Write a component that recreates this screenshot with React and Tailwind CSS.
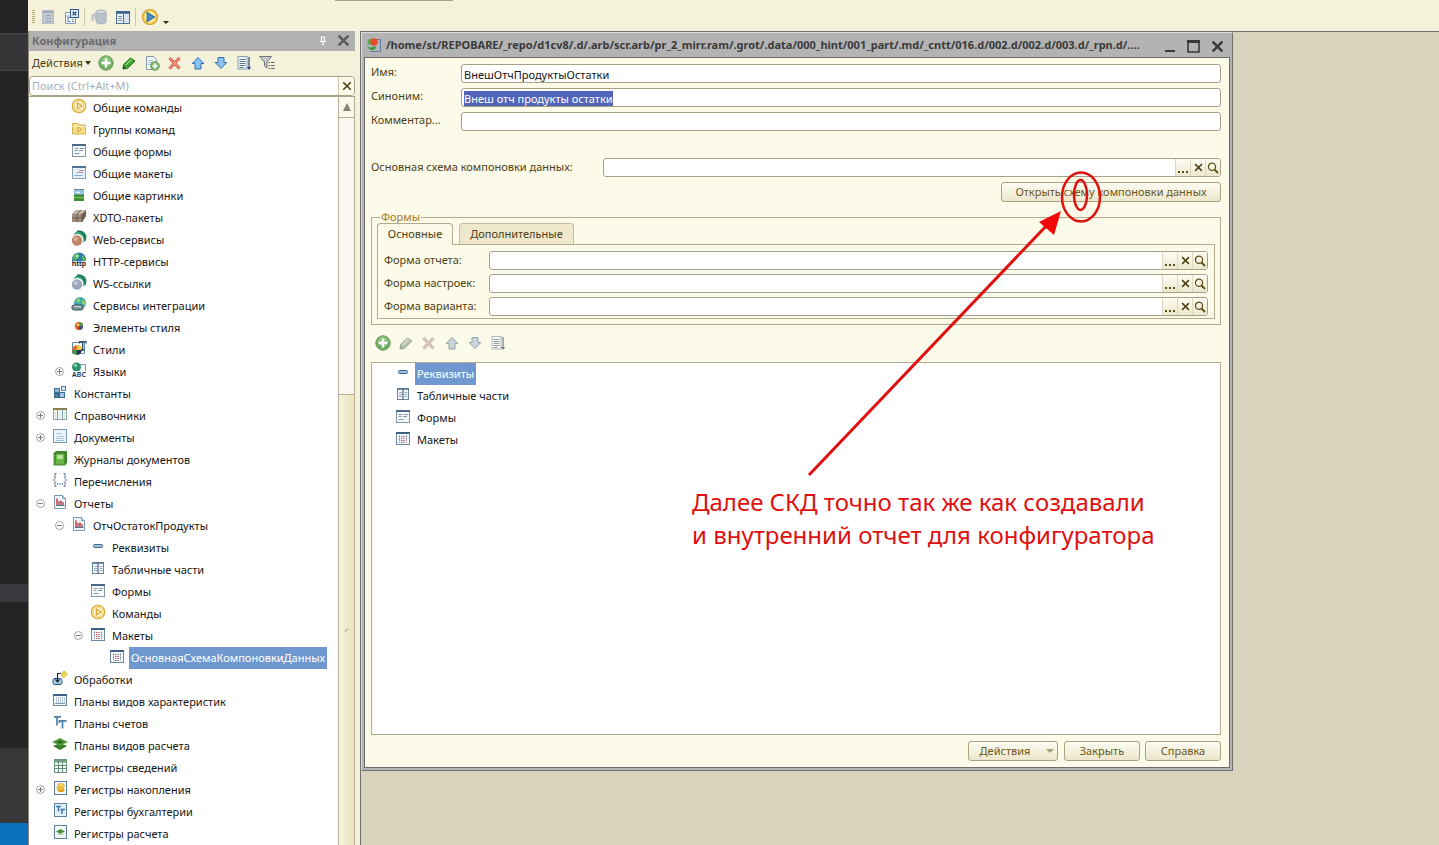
import React, { useEffect, useRef } from "react";

const icons = {
  command: (
    <>
      <circle cx="8" cy="8" r="6.700" fill="#fbe9a8" stroke="#dcae38" strokeWidth="1.300" />
      <circle cx="8" cy="8" r="4.600" fill="#fff7dc" stroke="#f0d68a" />
      <path d="M6.3 4.8v6.4L11.3 8z" fill="#fbe9b0" stroke="#cf9a1c" />
    </>
  ),
  commandGroup: (
    <>
      <path d="M1.500 3.500h5l1 1.500h7v9h-13z" fill="#f8dd87" stroke="#d3b057" />
      <path d="M1.500 6.500h13" stroke="#fff3c4" />
      <path d="M7 7v5l3.500-2.500z" fill="#fff0b8" stroke="#c29a3a" />
    </>
  ),
  form: (
    <>
      <rect x="1.500" y="2.500" width="13" height="12" fill="#f7fafc" stroke="#8296a8" />
      <path d="M1 3h14" stroke="#4a6a88" strokeWidth="2" />
      <path d="M3.500 6.500h4M3.500 8.500h3M3.500 11.500h5M9 6.500h4M8 8.500h4" stroke="#8297ab" />
    </>
  ),
  template: (
    <>
      <rect x="1.500" y="2.500" width="13" height="12" fill="#e4f0fa" stroke="#87a0b5" />
      <path d="M1 3h14" stroke="#4d7396" strokeWidth="2" />
      <path d="M8 6.500h5M6 8.500h6" stroke="#b88a9c" />
      <path d="M3.500 11.500h8" stroke="#7fa8cf" />
    </>
  ),
  picture: (
    <>
      <rect x="3" y="3" width="10" height="12" fill="#8fc3e6" />
      <path d="M3 3.500h10" stroke="#6d8090" />
      <path d="M5 6.500h4" stroke="#e2f1fb" strokeWidth="1.500" />
      <path d="M3 9c3-2 6 1 10-1v7H3z" fill="#3f8a35" />
      <path d="M3 11.500c3-1 6 1 10 0" stroke="#9acb6b" fill="none" />
    </>
  ),
  xdto: (
    <>
      <path d="M1 6l4-4h10v6l-4 6H1z" fill="#a08e7e" />
      <path d="M1 6h10l4-4H5z" fill="#c4b5a4" />
      <path d="M11 6v8l4-6V2z" fill="#75665a" />
      <path d="M6 6v8M1 10h10l4-5M11 6v8M6 6l4-4" stroke="#5b4f45" strokeWidth=".8" fill="none" />
    </>
  ),
  web: (
    <>
      <circle cx="9" cy="7" r="6.500" fill="#38a37c" />
      <path d="M6 1.500c5-1 9 4 8 9" stroke="#1c6e50" strokeWidth="1.500" fill="none" />
      <circle cx="6.500" cy="10" r="6" fill="#fff" />
      <circle cx="6" cy="10.500" r="5.200" fill="#c08667" />
      <circle cx="4.800" cy="9" r="2" fill="#dcae94" />
    </>
  ),
  http: (
    <>
      <circle cx="8" cy="7.500" r="7" fill="#2f79b8" />
      <path d="M3 3c3-3 6-1 5 2s-4 2-6 4c-1-2 0-4 1-6zM11 3c3 1 4 4 3 6-3 0-4-3-3-6z" fill="#53b45a" />
      <circle cx="6" cy="4" r="1.500" fill="#b9e3c0" />
      <rect x="0" y="9" width="16" height="7" fill="#fff" opacity=".85" />
      <text x="8" y="14" fontSize="7" fontWeight="600" textAnchor="middle" fontFamily="Noto Sans, sans-serif" fill="#111">http</text>
    </>
  ),
  ws: (
    <>
      <circle cx="9" cy="7" r="6.500" fill="#38a37c" />
      <path d="M6 1.500c5-1 9 4 8 9" stroke="#1c6e50" strokeWidth="1.500" fill="none" />
      <circle cx="6.500" cy="10" r="6" fill="#fff" />
      <circle cx="6" cy="10.500" r="5.200" fill="#98a5bb" />
      <circle cx="4.800" cy="9" r="2" fill="#c2cbd9" />
    </>
  ),
  integration: (
    <>
      <circle cx="9" cy="7" r="6" fill="#44a7b3" />
      <path d="M5 4c2-3 5-2 4 1s-3 2-4-1zM11 4c3 0 4 3 3 5-2 0-4-3-3-5z" fill="#8bd06a" />
      <rect x="1" y="9" width="11" height="5" rx="2" fill="#7d949b" stroke="#3c5359" />
      <path d="M3 10.500h7" stroke="#d7e3e6" />
    </>
  ),
  styleItem: (
    <>
      <circle cx="8" cy="8" r="4" fill="#d9542c" />
      <path d="M8 8V4a4 4 0 0 1 4 4z" fill="#4b9a3c" />
      <path d="M8 8h4a4 4 0 0 1-4 4z" fill="#3f4d9e" />
      <circle cx="7" cy="6.700" r="1.500" fill="#ffd23e" />
    </>
  ),
  style: (
    <>
      <path d="M1.500 2.500h12v11h-12z" fill="#fff" stroke="#5f8db0" />
      <circle cx="6" cy="10" r="4.800" fill="#e0702a" />
      <path d="M6 10V5.200A4.800 4.800 0 0 1 10.800 10z" fill="#ffcf33" />
      <path d="M6 10h4.800A4.800 4.800 0 0 1 6 14.800z" fill="#22305c" />
      <path d="M1.200 10H6v4.800A4.800 4.800 0 0 1 1.200 10z" fill="#3f8f4c" />
      <path d="M8.500 3.500V1.700h6.500v1.800M11.700 2v8M10 10h3.500" stroke="#2b4a66" strokeWidth="1.300" fill="none" />
    </>
  ),
  language: (
    <>
      <path d="M7 2.500h7.500v9H7z" fill="#fff" stroke="#6aa0b8" />
      <circle cx="5.500" cy="5" r="4.500" fill="#27926b" />
      <circle cx="4.500" cy="3.500" r="1.800" fill="#7fd0ad" />
      <rect x="0" y="9" width="16" height="7" fill="#fff" opacity=".9" />
      <text x="8" y="15" fontSize="7" fontWeight="600" textAnchor="middle" fontFamily="Noto Sans, sans-serif" fill="#16324a">ABC</text>
    </>
  ),
  constants: (
    <>
      <rect x="2.500" y="4.500" width="5" height="4" fill="#8fb8d6" stroke="#3e6f94" />
      <rect x="9.500" y="2.500" width="4" height="4" fill="#d6e8f5" stroke="#4c82a8" />
      <rect x="2.500" y="9.500" width="4" height="4" fill="#5587ab" stroke="#33627f" />
      <rect x="7.500" y="8.500" width="5" height="5" fill="#a4c6de" stroke="#3e6f94" />
    </>
  ),
  catalog: (
    <>
      <rect x="1.500" y="2.500" width="13" height="11" fill="#f3f8f5" stroke="#8aa3a0" />
      <path d="M1 3h14" stroke="#8c7d4a" strokeWidth="2" />
      <path d="M5.500 3v10.500M10.500 3v10.500" stroke="#7a9aa8" />
      <path d="M3.500 5v7M8 5v7M12.500 5v7" stroke="#d8e4d4" />
    </>
  ),
  document: (
    <>
      <rect x="1.500" y="1.500" width="13" height="13" fill="#edf5fc" stroke="#7798b3" />
      <path d="M4 5.500h6M4 8.500h8M4 10.500h8M4 12.500h8" stroke="#a9c5dd" />
    </>
  ),
  journal: (
    <>
      <path d="M2 3l2-2h11v12l-2 2H2z" fill="#3f8d2e" />
      <rect x="2" y="3" width="11" height="12" fill="#6bb548" stroke="#2f6f24" strokeWidth=".8" />
      <rect x="5" y="5" width="6" height="4" fill="#b8e29a" />
      <path d="M3.500 4v10" stroke="#2a5e20" strokeDasharray="1 1" />
    </>
  ),
  enumeration: (
    <>
      <path d="M4.500 1.500H3v5L1.500 8 3 9.500v5h1.500M11.500 1.500H13v5L14.500 8 13 9.500v5h-1.500" fill="none" stroke="#59728a" />
      <path d="M5 12h1.200M7.400 12h1.200M9.800 12H11" stroke="#59728a" strokeWidth="1.500" />
    </>
  ),
  report: (
    <>
      <path d="M2.500 1.500h8l3 3v10h-11z" fill="#f3f8fc" stroke="#7c97ad" />
      <path d="M10.500 1.500v3h3" fill="#d4e2ee" stroke="#7c97ad" />
      <path d="M5 4.500V11M9 6.500V11" stroke="#c23b3b" strokeWidth="1.500" />
      <path d="M7 7v4M11 8v3" stroke="#8a3350" strokeWidth="1.200" />
      <path d="M4 11.500h8.500" stroke="#59728a" />
    </>
  ),
  attribute: <rect x="3.500" y="6.500" width="9" height="3" rx="1" fill="#9bc0de" stroke="#3f6789" />,
  tabular: (
    <>
      <rect x="2.500" y="2.500" width="11" height="11" fill="#f4f8fc" stroke="#6a85a0" />
      <path d="M2 3h12" stroke="#58748f" strokeWidth="1.500" />
      <path d="M8 2v12" stroke="#4b6985" strokeWidth="1.200" />
      <path d="M4 6.500h3M4 8.500h3M4 10.500h3M9.500 6.500h3M9.500 8.500h3M9.500 10.500h3" stroke="#96adc4" />
    </>
  ),
  layout: (
    <>
      <rect x="1.500" y="2.500" width="13" height="12" fill="#f7fafc" stroke="#6c86a0" />
      <path d="M1 3h14" stroke="#3f6187" strokeWidth="2" />
      <path d="M4.500 5.500v7M11.500 5.500v7" stroke="#6d8299" strokeDasharray="2 1" />
      <path d="M6 6.500h4M6 8.500h4M6 10.500h4M6 12.500h4" stroke="#b0566a" strokeDasharray="1.500 .800" />
    </>
  ),
  processing: (
    <>
      <path d="M9 5l3-4 3.500 3-4 4z" fill="#f5d54c" stroke="#d9b93a" />
      <rect x="1" y="8.500" width="9" height="6" rx="2" fill="#a8cbe6" stroke="#24507a" />
      <path d="M9 3.500H5.500V11.500M3.500 9.500l2 2.500 2-2.500" fill="none" stroke="#16283a" strokeWidth="1.200" />
    </>
  ),
  charPlan: (
    <>
      <rect x="1.500" y="2.500" width="13" height="11" fill="#f5f9fc" stroke="#6c86a0" />
      <path d="M1 3h14" stroke="#3f6187" strokeWidth="2" />
      <path d="M4.500 5.500v5M6.500 5.500v5M8.500 5.500v5M10.500 5.500v5M12.500 5.500v5" stroke="#7e9ab5" strokeDasharray="1 1" />
      <path d="M3 11.500h10" stroke="#7e9ab5" />
    </>
  ),
  accountPlan: (
    <path d="M2 2.800h7M5 2.500v9M7.800 6.800h6.700M10.500 6.500v8M7.500 6v3" fill="none" stroke="#4c7ea6" strokeWidth="1.700" />
  ),
  calcPlan: (
    <>
      <path d="M1 10l7-3 7 3-7 4z" fill="#3c7c28" />
      <path d="M0 6l8-4 8 4-8 4z" fill="#56a13a" />
      <path d="M4 6l4-2 4 2-4 2z" fill="#2f6b22" />
    </>
  ),
  infoReg: (
    <>
      <rect x="2.500" y="1.500" width="12" height="13" fill="#f2f8f3" stroke="#6b8d80" />
      <path d="M2 3h13" stroke="#6fa07a" strokeWidth="3" />
      <path d="M2.500 7.500h12M2.500 10.500h12M6.500 2v12M10.500 2v12" stroke="#6b8d80" />
    </>
  ),
  accumReg: (
    <>
      <rect x="2.500" y="1.500" width="12" height="13" fill="#f3f8fc" stroke="#5e7f9b" />
      <ellipse cx="9" cy="10" rx="3.500" ry="2" fill="#e09b1e" />
      <ellipse cx="8" cy="8" rx="3.500" ry="2" fill="#f0bc3a" />
      <ellipse cx="9" cy="5.500" rx="3.500" ry="2" fill="#f7d469" stroke="#d18e18" strokeWidth=".6" />
    </>
  ),
  bookReg: (
    <>
      <rect x="2.500" y="1.500" width="12" height="13" fill="#e3f0fa" stroke="#5e7f9b" />
      <path d="M4 4.500h5M6.500 4v5.500M8.500 7.500h4.500M10 7v5" fill="none" stroke="#3f77a3" strokeWidth="1.500" />
    </>
  ),
  calcReg: (
    <>
      <rect x="2.500" y="1.500" width="12" height="13" fill="#f3f8fc" stroke="#5e7f9b" />
      <path d="M4 7.500L8.500 5 13 7.500 8.500 10z" fill="#479434" />
      <path d="M5 10.500h7" stroke="#b9d3b0" />
    </>
  ),
  add: (
    <>
      <circle cx="8" cy="8" r="7.200" fill="#6fae5c" stroke="#6d9a62" />
      <circle cx="8" cy="6.500" r="5" fill="#8cc67a" />
      <path d="M8 3.500v9M3.500 8h9" stroke="#fff" strokeWidth="2.400" />
    </>
  ),
  edit: (
    <>
      <path d="M2.500 9.500L9.500 3l4.500 3-7.500 7.500L2 14z" fill="#3fa535" stroke="#257a1f" />
      <path d="M4.500 10l6-5.500" stroke="#8ad872" strokeWidth="1.300" />
      <path d="M2 14l.7-3 2.300 2.300z" fill="#20401c" />
    </>
  ),
  copy: (
    <>
      <path d="M2.500 1.500h7l3 3v10h-10z" fill="#f1f6fb" stroke="#8298ad" />
      <path d="M4.500 5.500h5M4.500 7.500h4M4.500 9.500h3" stroke="#a5b9cb" />
      <circle cx="11" cy="11" r="4.300" fill="#8fbf7e" stroke="#5f9152" />
      <path d="M11 8.500v5M8.500 11h5" stroke="#fff" strokeWidth="1.500" />
    </>
  ),
  remove: (
    <>
      <path d="M2.500 3l10 10.500M12.500 3l-10 10.500" stroke="#c4402c" strokeWidth="2.800" />
      <path d="M2.700 3.200l9.600 10.100M12.300 3.200L2.700 13.300" stroke="#f79a88" strokeWidth="1.400" />
    </>
  ),
  up: <path d="M8 2.500l5.800 6H11v5.500H5V8.500H2.200z" fill="#8cc2f0" stroke="#2f6fae" />,
  down: <path d="M8 13.500l5.800-6H11V2.500H5v5H2.200z" fill="#8cc2f0" stroke="#2f6fae" />,
  sort: (
    <>
      <rect x="2" y="1.500" width="9" height="12.500" fill="#f2f6fa" stroke="#8ba0b4" />
      <path d="M3.500 4.500h6M3.500 6.500h6M3.500 8.500h6M3.500 10.500h6M3.500 12.500h4" stroke="#5f7992" />
      <path d="M13 2v12M11.500 12l1.500 2 1.500-2" fill="none" stroke="#2c4a78" strokeWidth="1.200" />
    </>
  ),
  filter: (
    <>
      <path d="M.5 1.500h12L8 7v6L5.500 11V7z" fill="#c5c9cc" stroke="#6e767c" />
      <path d="M9.500 7.500h1.500M12 7.500h3.500M9.500 10.500h1.500M12 10.500h3.500M9.500 13.500h1.500M12 13.500h3.500" stroke="#5c6268" />
    </>
  ),
  docGray: (
    <>
      <rect x="2.500" y="1.500" width="11" height="13" fill="#c3c8d0" stroke="#b6bcc5" />
      <path d="M3 3h10" stroke="#a4abb8" strokeWidth="2" />
      <path d="M6 6.500h5M6 9.500h5M6 12.500h5" stroke="#9ca4b0" />
    </>
  ),
  docTree: (
    <>
      <path d="M1.500 3.500h10v11h-10z" fill="#eef3f8" stroke="#8298ad" />
      <path d="M4 6v6.500h2.500M4 8.500h2.500M8 10.500h1.500M8 12.500h2" fill="none" stroke="#6d86a0" />
      <rect x="6.500" y=".5" width="8" height="8" fill="#e4eef7" stroke="#335d86" />
      <path d="M8.700 2.700l3.600 3.600M12.300 2.700L8.700 6.300" stroke="#2c5a88" strokeWidth="1.400" />
    </>
  ),
  database: (
    <>
      <path d="M5 3v10c0 2.500 10 2.500 10 0V3z" fill="#b9c0ca" stroke="#a7afba" />
      <ellipse cx="10" cy="3" rx="5" ry="2" fill="#d6dae0" stroke="#a7afba" />
      <path d="M1.500 12V8C1.500 5 4 5 6 7M3.500 4.500l3 3-3.500 1" fill="none" stroke="#b9bec4" strokeWidth="2" />
    </>
  ),
  windowIcon: (
    <>
      <rect x="1.500" y="2.500" width="13" height="12" fill="#eaf2fa" stroke="#54728f" />
      <path d="M1 3.500h14" stroke="#3b6288" strokeWidth="2.500" />
      <path d="M3 7.500h4M3 9.500h4M3 11.500h4" stroke="#7d97b0" />
      <rect x="9" y="5" width="5" height="9" fill="#d9e4f0" />
      <path d="M8.500 5v9" stroke="#54728f" />
    </>
  ),
  run: (
    <>
      <circle cx="8" cy="8" r="6.700" fill="#f9cf55" stroke="#cf9a2c" />
      <circle cx="8" cy="8" r="4.800" fill="#fdeaa6" />
      <path d="M5.500 4v8L12 8z" fill="#4a92cc" stroke="#2a6aa0" />
    </>
  ),
};

function Icon({ name, className = "size-4" }) {
  return (
    <svg viewBox="0 0 16 16" className={`${className} shrink-0`} aria-hidden="true">
      {icons[name]}
    </svg>
  );
}

const Cross = ({ className, width = 2 }) => (
  <svg viewBox="0 0 12 12" className={`${className} shrink-0`} aria-hidden="true">
    <path d="M1.500 1.500l9 9M10.500 1.500l-9 9" stroke="currentColor" strokeWidth={width} />
  </svg>
);

const indents = ["pl-1", "pl-[23px]", "pl-[42px]", "pl-[61px]"];

const tree = [
  [1, "command", "Общие команды"],
  [1, "commandGroup", "Группы команд"],
  [1, "form", "Общие формы"],
  [1, "template", "Общие макеты"],
  [1, "picture", "Общие картинки"],
  [1, "xdto", "XDTO-пакеты"],
  [1, "web", "Web-сервисы"],
  [1, "http", "HTTP-сервисы"],
  [1, "ws", "WS-ссылки"],
  [1, "integration", "Сервисы интеграции"],
  [1, "styleItem", "Элементы стиля"],
  [1, "style", "Стили"],
  [1, "language", "Языки", "+"],
  [0, "constants", "Константы"],
  [0, "catalog", "Справочники", "+"],
  [0, "document", "Документы", "+"],
  [0, "journal", "Журналы документов"],
  [0, "enumeration", "Перечисления"],
  [0, "report", "Отчеты", "-"],
  [1, "report", "ОтчОстатокПродукты", "-"],
  [2, "attribute", "Реквизиты"],
  [2, "tabular", "Табличные части"],
  [2, "form", "Формы"],
  [2, "command", "Команды"],
  [2, "layout", "Макеты", "-"],
  [3, "layout", "ОсновнаяСхемаКомпоновкиДанных", null, true],
  [0, "processing", "Обработки"],
  [0, "charPlan", "Планы видов характеристик"],
  [0, "accountPlan", "Планы счетов"],
  [0, "calcPlan", "Планы видов расчета"],
  [0, "infoReg", "Регистры сведений"],
  [0, "accumReg", "Регистры накопления", "+"],
  [0, "bookReg", "Регистры бухгалтерии"],
  [0, "calcReg", "Регистры расчета"],
];

function Label({ text, selected }) {
  return (
    <span
      className={`flex h-full items-center px-0.5 whitespace-nowrap ${selected ? "bg-[#6f98d0] text-white" : "text-[#161616]"}`}
    >
      {text}
    </span>
  );
}

function TreeRow({ level, icon, text, toggle, selected }) {
  return (
    <li className={`flex h-[22px] items-center ${indents[level]}`}>
      <span className="mr-1 flex w-[15px] shrink-0 justify-center">
        {toggle && (
          <button aria-label={toggle === "+" ? "Развернуть" : "Свернуть"} className="pb-px">
            <svg viewBox="0 0 9 9" className="size-[9px]">
              <circle cx="4.500" cy="4.500" r="4" fill="#fff" stroke="#a3a3a3" />
              <path d={toggle === "+" ? "M2 4.500h5M4.500 2v5" : "M2 4.500h5"} stroke="#7a7a7a" />
            </svg>
          </button>
        )}
      </span>
      <span className="mr-1 flex h-full pt-px">
        <Icon name={icon} />
      </span>
      <Label text={text} selected={selected} />
    </li>
  );
}

const actionIcons = [
  ["add", "Добавить"],
  ["edit", "Изменить"],
  ["copy", "Скопировать"],
  ["remove", "Удалить"],
  ["up", "Вверх"],
  ["down", "Вниз"],
  ["sort", "Сортировка"],
  ["filter", "Фильтр"],
];

function ConfigurationPanel() {
  return (
    <aside className="flex w-[327px] shrink-0 flex-col border-l border-[#8f8b7c]">
      <header className="flex h-5 items-center bg-[#b1b1b1] pr-[5px] pb-px pl-[3px]">
        <h2 className="flex-1 font-bold text-[#6b6b6b]">Конфигурация</h2>
        <button aria-label="Закрепить" className="mr-[10px] text-white">
          <svg viewBox="0 0 8 10" className="h-[10px] w-2">
            <path d="M2.500 1h3v4.500h-3zM1 5.500h6M4 6v3.500" fill="none" stroke="currentColor" strokeWidth="1.200" />
          </svg>
        </button>
        <button aria-label="Закрыть панель" className="text-[#5c5c5c]">
          <Cross className="size-[13px]" width={2.4} />
        </button>
      </header>
      <div className="flex h-[25px] items-center gap-[7px] bg-[#f5f2dc] pb-px pl-[3px]">
        <button className="flex items-center gap-0.5 text-[#4c3f14]">
          Действия
          <svg viewBox="0 0 6 4" className="h-1 w-[6px]">
            <path d="M0 0h6L3 4z" fill="#3d3416" />
          </svg>
        </button>
        {actionIcons.map(([name, title]) => (
          <button key={name} aria-label={title}>
            <Icon name={name} />
          </button>
        ))}
      </div>
      <div className="flex h-5 overflow-hidden rounded-sm border border-[#aaa388] bg-white">
        <input
          aria-label="Поиск"
          placeholder="Поиск (Ctrl+Alt+M)"
          className="min-w-0 flex-1 px-0.5 outline-none placeholder:text-[#a7afbb]"
        />
        <button
          aria-label="Очистить"
          className="flex w-4 items-center justify-center border-l border-[#cfc9ac] bg-[#fbf9e8] text-[#4c4010]"
        >
          <Cross className="size-[10px]" />
        </button>
      </div>
      <div className="flex min-h-0 flex-1 border-t border-[#aaa388] bg-white">
        <ul className="min-w-0 flex-1 overflow-hidden">
          {tree.map(([level, icon, text, toggle, selected]) => (
            <TreeRow key={`${level}${text}`} level={level} icon={icon} text={text} toggle={toggle} selected={selected} />
          ))}
        </ul>
        <div className="flex w-[17px] shrink-0 flex-col border-x border-[#b5ae94] bg-[#f9f7f1]">
          <button
            aria-label="Прокрутить вверх"
            className="flex h-[21px] shrink-0 items-center justify-center border-b border-[#b5ae94] bg-[#faf8ea]"
          >
            <svg viewBox="0 0 8 8" className="size-2">
              <path d="M4 0l4 8H0z" fill="#857f70" />
            </svg>
          </button>
          <div className="h-[276px] shrink-0" />
          <div className="flex flex-1 items-center justify-center border-t border-[#b5ae94] bg-linear-to-r from-[#f6f3da] to-[#e9e4bd]">
            <span className="mb-[-22px] size-1 rounded-full border-t border-l border-[#b0a982]" />
          </div>
        </div>
      </div>
    </aside>
  );
}

const fieldFrame = "h-[19px] min-w-0 flex-1 rounded-[3px] border border-[#a8a18a] bg-white";
const entry = "min-w-0 flex-1 px-0.5 pt-[3px] pb-px leading-[13px] text-[#161616] outline-none";

function TextField({ id, label, value = "", inputRef }) {
  return (
    <div className="flex">
      <label htmlFor={id} className="w-[90px] shrink-0 leading-4">
        {label}
      </label>
      <input
        id={id}
        ref={inputRef}
        defaultValue={value}
        className={`${fieldFrame} ${entry} selection:bg-[#5065b9] selection:text-white`}
      />
    </div>
  );
}

const chip = "flex w-[15px] items-center justify-center border-l border-[#ddd7bd] bg-linear-to-b from-[#fdfcf2] to-[#ece8cf]";

function PickerField({ id, label, labelWidth }) {
  return (
    <div className="flex">
      <label htmlFor={id} className={`${labelWidth} shrink-0 leading-[18px]`}>
        {label}
      </label>
      <div className={`${fieldFrame} flex overflow-hidden`}>
        <input id={id} className={entry} />
        <button type="button" aria-label="Выбрать" className={chip}>
          <svg viewBox="0 0 12 12" className="size-3">
            <path d="M1 9h2v2H1zM5 9h2v2H5zM9 9h2v2H9z" fill="#5b4e18" />
          </svg>
        </button>
        <button type="button" aria-label="Очистить" className={chip}>
          <Cross className="size-[9px]" />
        </button>
        <button type="button" aria-label="Открыть" className={chip}>
          <svg viewBox="0 0 12 12" className="size-3">
            <circle cx="5" cy="4.800" r="3.600" fill="none" stroke="#5b4e18" strokeWidth="1.200" />
            <path d="M7.500 7.500l3.500 3.500" stroke="#5b4e18" strokeWidth="1.800" />
          </svg>
        </button>
      </div>
    </div>
  );
}

function PushButton({ className, children }) {
  return (
    <button
      type="button"
      className={`flex h-5 items-center justify-center rounded-[3px] border border-[#aaa27c] bg-linear-to-b from-[#fdfcf3] to-[#ebe6cb] text-[#6a5818] ${className}`}
    >
      {children}
    </button>
  );
}

const objectParts = [
  ["attribute", "Реквизиты", true],
  ["tabular", "Табличные части"],
  ["form", "Формы"],
  ["layout", "Макеты"],
];

const objectActions = [
  ["add", "Добавить", ""],
  ["edit", "Изменить", "opacity-50 grayscale-70"],
  ["remove", "Удалить", "opacity-50 grayscale-70"],
  ["up", "Вверх", "opacity-60 grayscale-60"],
  ["down", "Вниз", "opacity-60 grayscale-60"],
  ["sort", "Сортировка", "opacity-70 grayscale-50"],
];

function Annotation() {
  return (
    <div className="pointer-events-none absolute inset-0 text-[#e01010]">
      <svg className="absolute top-0 left-0 h-full w-full" aria-hidden="true">
        <g fill="none" stroke="#e01010">
          <ellipse cx="719" cy="164" rx="19" ry="24.500" strokeWidth="2.500" />
          <ellipse cx="718.500" cy="162" rx="6.500" ry="15" strokeWidth="2.500" />
          <path d="M447 442L686 191" strokeWidth="3" />
        </g>
        <path d="M699 178l-7 24-15-13z" fill="#f00808" />
      </svg>
      <p className="absolute top-[452px] left-[330px] text-[24px] leading-[33px] whitespace-nowrap">
        Далее СКД точно так же как создавали
        <br />и внутренний отчет для конфигуратора
      </p>
    </div>
  );
}

function ReportDialog() {
  const synonym = useRef(null);
  useEffect(() => {
    synonym.current.focus();
    synonym.current.select();
  }, []);
  return (
    <section className="relative w-full max-w-[872px] border border-t-[#dcdada] border-r-[#707070] border-b-[#707070] border-l-[#dcdada] bg-[#b3b3b3] pr-[2px] pb-[2px] pl-[2px]">
      <header className="flex h-6 items-center pr-[6px] pl-0.5 text-[#3a3a3a]">
        <svg viewBox="0 0 16 16" className="mr-1 size-4 shrink-0" aria-hidden="true">
          <path d="M9 2.500h5.500v12H4" fill="none" stroke="#6178a0" />
          <circle cx="4.500" cy="5" r="3" fill="#4fae4c" />
          <circle cx="8" cy="5" r="3.700" fill="#ee4a2c" />
          <path d="M1 9.500c2 4 7 5 9 1l-2-1.500c-2 2-4 2-7 .5z" fill="#3d9648" />
        </svg>
        <h1 className="min-w-0 flex-1 truncate font-bold">
          /home/st/REPOBARE/_repo/d1cv8/.d/.arb/scr.arb/pr_2_mirr.ram/.grot/.data/000_hint/001_part/.md/_cntt/016.d/002.d/002.d/003.d/_rpn.d/....
        </h1>
        <div className="ml-2 flex items-center gap-[11px] pt-0.5">
          <button aria-label="Свернуть">
            <svg viewBox="0 0 12 12" className="size-3">
              <path d="M1 11h10" stroke="currentColor" strokeWidth="2" />
            </svg>
          </button>
          <button aria-label="Развернуть">
            <svg viewBox="0 0 13 13" className="size-[13px]">
              <path d="M1 1v11h11V1z" fill="none" stroke="currentColor" strokeWidth="1.600" />
              <path d="M0 1.500h13" stroke="currentColor" strokeWidth="3" />
            </svg>
          </button>
          <button aria-label="Закрыть окно">
            <Cross className="size-[13px]" width={2.4} />
          </button>
        </div>
      </header>
      <form
        className="flex flex-col border border-[#6c6c6c] bg-[#fcfae9] pt-[6px] pr-2 pb-[6px] pl-[6px] text-[#4c3f14]"
        onSubmit={(e) => e.preventDefault()}
      >
        <div className="flex flex-col gap-[5px]">
          <TextField id="name" label="Имя:" value="ВнешОтчПродуктыОстатки" />
          <TextField id="synonym" label="Синоним:" value="Внеш отч продукты остатки" inputRef={synonym} />
          <TextField id="comment" label="Комментар..." />
        </div>
        <div className="mt-[27px]">
          <PickerField id="schema" label="Основная схема компоновки данных:" labelWidth="w-[232px]" />
        </div>
        <PushButton className="mt-[5px] w-[220px] self-end">Открыть схему компоновки данных</PushButton>
        <fieldset className="mt-[9px] border border-[#b3ab8c] px-[5px] pb-[5px]">
          <legend className="ml-[3px] px-px leading-3 text-[#a47a25]">Формы</legend>
          <div role="tablist" className="relative flex gap-[6px]">
            <button
              type="button"
              role="tab"
              aria-selected="true"
              className="-mb-px h-[22px] w-[76px] rounded-t-[4px] border border-b-0 border-[#b3ab8c] bg-[#fcfae9] pb-0.5"
            >
              Основные
            </button>
            <button
              type="button"
              role="tab"
              aria-selected="false"
              className="h-[21px] w-[115px] rounded-t-[4px] border border-b-0 border-[#c5bd9e] bg-[#eee7cc] pb-px"
            >
              Дополнительные
            </button>
          </div>
          <div role="tabpanel" className="flex flex-col gap-1 border border-[#b3ab8c] pt-[6px] pr-[6px] pb-[2px] pl-[6px]">
            <PickerField id="reportForm" label="Форма отчета:" labelWidth="w-[105px]" />
            <PickerField id="settingsForm" label="Форма настроек:" labelWidth="w-[105px]" />
            <PickerField id="variantForm" label="Форма варианта:" labelWidth="w-[105px]" />
          </div>
        </fieldset>
        <div className="mt-[10px] flex gap-[7px] pl-1">
          {objectActions.map(([name, title, tone]) => (
            <button key={name} type="button" aria-label={title} className={tone}>
              <Icon name={name} />
            </button>
          ))}
        </div>
        <ul className="mt-[11px] min-h-[373px] border border-[#b3ab8c] bg-white">
          {objectParts.map(([icon, text, selected]) => (
            <li key={text} className="flex h-[22px] items-center pl-[23px]">
              <span className="mr-1 flex h-full pt-px">
                <Icon name={icon} />
              </span>
              <Label text={text} selected={selected} />
            </li>
          ))}
        </ul>
        <div className="mt-[6px] flex justify-end gap-[5px]">
          <PushButton className="mr-px w-[90px] gap-4 pl-2">
            Действия
            <svg viewBox="0 0 8 4" className="h-1 w-2">
              <path d="M0 0h8L4 4z" fill="#a89d75" />
            </svg>
          </PushButton>
          <PushButton className="w-[76px]">Закрыть</PushButton>
          <PushButton className="w-[76px]">Справка</PushButton>
        </div>
      </form>
      <Annotation />
    </section>
  );
}

function MainToolbar() {
  return (
    <header className="flex h-[31px] shrink-0 flex-col bg-[#f5f2dc]">
      <div className="ml-[307px] h-px w-[118px] bg-[#aaa388]" />
      <div className="flex flex-1 items-center pt-px pl-1">
        <span className="mr-[5px] h-[14px] w-[3px] bg-[repeating-linear-gradient(#b7a975_0_1px,transparent_1px_2px)]" />
        <button aria-label="Справка" className="mr-2">
          <Icon name="docGray" />
        </button>
        <button aria-label="Дерево конфигурации">
          <Icon name="docTree" />
        </button>
        <span className="mr-[6px] ml-1 h-[18px] w-px bg-[#cdc7aa]" />
        <button aria-label="База данных" className="mr-2">
          <Icon name="database" />
        </button>
        <button aria-label="Окно">
          <Icon name="windowIcon" />
        </button>
        <span className="mr-[5px] ml-1 h-[18px] w-px bg-[#cdc7aa]" />
        <button aria-label="Запуск" className="flex items-center gap-1">
          <Icon name="run" className="size-[18px]" />
          <svg viewBox="0 0 6 3" className="mt-3 h-[3px] w-[6px]">
            <path d="M0 0h6L3 3z" fill="#2d2716" />
          </svg>
        </button>
      </div>
    </header>
  );
}

export default function App() {
  return (
    <div className="flex h-screen min-h-[600px] overflow-hidden bg-[#f5f2dc] font-['Noto_Sans',sans-serif] text-[11px] leading-4">
      <div className="flex w-7 shrink-0 flex-col bg-[#242424]">
        <div className="h-[33px] bg-[#232325]" />
        <div className="h-[38px] border-y border-[#48484a] bg-[#363638]" />
        <div className="h-[513px]" />
        <div className="h-[18px] bg-[#38383f]" />
        <div className="h-[146px]" />
        <div className="flex-1 bg-[#373737]" />
        <div className="h-[22px] bg-[#0a70bd]" />
      </div>
      <div className="flex min-w-0 flex-1 flex-col">
        <MainToolbar />
        <div className="flex min-h-0 flex-1">
          <ConfigurationPanel />
          <main className="ml-[5px] min-w-0 flex-1 border-t border-l border-[#6f6f6f] bg-[#d8d3bd]">
            <ReportDialog />
          </main>
        </div>
      </div>
    </div>
  );
}
